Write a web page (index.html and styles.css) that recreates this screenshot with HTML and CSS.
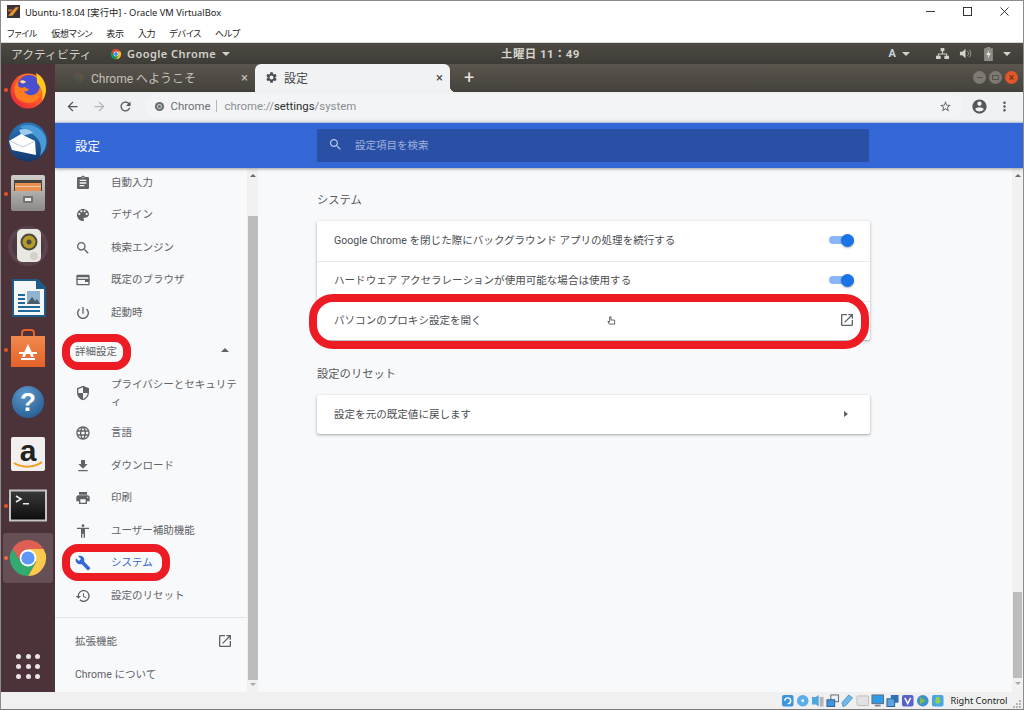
FILE: index.html
```html
<!DOCTYPE html>
<html lang="ja">
<head>
<meta charset="utf-8">
<title>Ubuntu-18.04 [実行中] - Oracle VM VirtualBox</title>
<link rel="stylesheet" href="styles.css">
</head>
<body>
<svg class="defs" width="0" height="0" aria-hidden="true">
  <defs>
    <symbol id="i-assign" viewBox="0 0 24 24"><path d="M19 3h-4.18C14.4 1.84 13.3 1 12 1c-1.3 0-2.4.84-2.82 2H5c-1.1 0-2 .9-2 2v14c0 1.1.9 2 2 2h14c1.1 0 2-.9 2-2V5c0-1.1-.9-2-2-2zm-7 0c.55 0 1 .45 1 1s-.45 1-1 1-1-.45-1-1 .45-1 1-1zm2 14H7v-2h7v2zm3-4H7v-2h10v2zm0-4H7V7h10v2z"/></symbol>
    <symbol id="i-palette" viewBox="0 0 24 24"><path d="M12 3c-4.97 0-9 4.03-9 9s4.03 9 9 9c.83 0 1.5-.67 1.5-1.5 0-.39-.15-.74-.39-1.01-.23-.26-.38-.61-.38-.99 0-.83.67-1.5 1.5-1.5H16c2.76 0 5-2.24 5-5 0-4.42-4.03-8-9-8zm-5.5 9c-.83 0-1.5-.67-1.5-1.5S5.67 9 6.5 9 8 9.67 8 10.5 7.33 12 6.5 12zm3-4C8.67 8 8 7.33 8 6.5S8.67 5 9.5 5s1.5.67 1.5 1.5S10.33 8 9.5 8zm5 0c-.83 0-1.5-.67-1.5-1.5S13.67 5 14.5 5s1.5.67 1.5 1.5S15.33 8 14.5 8zm3 4c-.83 0-1.5-.67-1.5-1.5S16.67 9 17.5 9s1.5.67 1.5 1.5-.67 1.5-1.5 1.5z"/></symbol>
    <symbol id="i-search" viewBox="0 0 24 24"><path d="M15.5 14h-.79l-.28-.27C15.41 12.59 16 11.11 16 9.5 16 5.91 13.09 3 9.5 3S3 5.91 3 9.5 5.91 16 9.5 16c1.61 0 3.09-.59 4.23-1.57l.27.28v.79l5 4.99L20.49 19l-4.99-5zm-6 0C7.01 14 5 11.99 5 9.5S7.01 5 9.5 5 14 7.01 14 9.5 11.99 14 9.5 14z"/></symbol>
    <symbol id="i-browser" viewBox="0 0 24 24"><path d="M20 4H4c-1.11 0-2 .9-2 2v12c0 1.1.89 2 2 2h16c1.1 0 2-.9 2-2V6c0-1.1-.89-2-2-2zm0 14H4v-6h11v3h5v3zm0-8H4V8h16v2z"/></symbol>
    <symbol id="i-power" viewBox="0 0 24 24"><path d="M13 3h-2v10h2V3zm4.83 2.17l-1.42 1.42C17.99 7.86 19 9.81 19 12c0 3.87-3.13 7-7 7s-7-3.13-7-7c0-2.19 1.01-4.14 2.58-5.42L6.17 5.17C4.23 6.82 3 9.26 3 12c0 4.97 4.03 9 9 9s9-4.03 9-9c0-2.74-1.23-5.18-3.17-6.83z"/></symbol>
    <symbol id="i-shield" viewBox="0 0 24 24"><path d="M12 1L3 5v6c0 5.55 3.84 10.74 9 12 5.16-1.26 9-6.45 9-12V5l-9-4zm0 10.99h7c-.53 4.12-3.28 7.79-7 8.94V12H5V6.3l7-3.11v8.8z"/></symbol>
    <symbol id="i-globe" viewBox="0 0 24 24"><path d="M11.99 2C6.47 2 2 6.48 2 12s4.47 10 9.99 10C17.52 22 22 17.52 22 12S17.52 2 11.99 2zm6.93 6h-2.95c-.32-1.25-.78-2.45-1.38-3.56 1.84.63 3.37 1.91 4.33 3.56zM12 4.04c.83 1.2 1.48 2.53 1.91 3.96h-3.82c.43-1.43 1.08-2.76 1.91-3.96zM4.26 14C4.1 13.36 4 12.69 4 12s.1-1.36.26-2h3.38c-.08.66-.14 1.32-.14 2 0 .68.06 1.34.14 2H4.26zm.82 2h2.95c.32 1.25.78 2.45 1.38 3.56-1.84-.63-3.37-1.9-4.33-3.56zm2.95-8H5.08c.96-1.66 2.49-2.93 4.33-3.56C8.81 5.55 8.35 6.75 8.03 8zM12 19.96c-.83-1.2-1.48-2.53-1.91-3.96h3.82c-.43 1.43-1.08 2.76-1.91 3.96zM14.34 14H9.66c-.09-.66-.16-1.32-.16-2 0-.68.07-1.35.16-2h4.68c.09.65.16 1.32.16 2 0 .68-.07 1.34-.16 2zm.25 5.56c.6-1.11 1.06-2.31 1.38-3.56h2.95c-.96 1.65-2.49 2.93-4.33 3.56zM16.36 14c.08-.66.14-1.32.14-2 0-.68-.06-1.34-.14-2h3.38c.16.64.26 1.31.26 2s-.1 1.36-.26 2h-3.38z"/></symbol>
    <symbol id="i-download" viewBox="0 0 24 24"><path d="M19 9h-4V3H9v6H5l7 7 7-7zM5 18v2h14v-2H5z"/></symbol>
    <symbol id="i-print" viewBox="0 0 24 24"><path d="M19 8H5c-1.66 0-3 1.34-3 3v6h4v4h12v-4h4v-6c0-1.66-1.34-3-3-3zm-3 11H8v-5h8v5zm3-7c-.55 0-1-.45-1-1s.45-1 1-1 1 .45 1 1-.45 1-1 1zm-1-9H6v4h12V3z"/></symbol>
    <symbol id="i-access" viewBox="0 0 24 24"><path d="M12 2c1.1 0 2 .9 2 2s-.9 2-2 2-2-.9-2-2 .9-2 2-2zm9 7h-6v13h-2v-6h-2v6H9V9H3V7h18v2z"/></symbol>
    <symbol id="i-build" viewBox="0 0 24 24"><path d="M22.7 19l-9.1-9.1c.9-2.3.4-5-1.500-6.900-2-2-5-2.400-7.400-1.300L9 6 6 9 1.600 4.700C.4 7.100.9 10.100 2.900 12.100c1.900 1.900 4.600 2.400 6.900 1.500l9.100 9.100c.4.4 1 .4 1.400 0l2.300-2.300c.5-.4.5-1.100.1-1.400z"/></symbol>
    <symbol id="i-restore" viewBox="0 0 24 24"><path d="M13 3c-4.97 0-9 4.03-9 9H1l3.89 3.89.07.14L9 12H6c0-3.87 3.13-7 7-7s7 3.13 7 7-3.13 7-7 7c-1.93 0-3.68-.79-4.94-2.06l-1.42 1.42C8.27 19.99 10.51 21 13 21c4.97 0 9-4.03 9-9s-4.03-9-9-9zm-1 5v5l4.28 2.54.72-1.21-3.5-2.08V8H12z"/></symbol>
    <symbol id="i-open" viewBox="0 0 24 24"><path d="M19 19H5V5h7V3H5c-1.11 0-2 .9-2 2v14c0 1.1.89 2 2 2h14c1.1 0 2-.9 2-2v-7h-2v7zM14 3v2h3.59l-9.83 9.83 1.41 1.41L19 6.41V10h2V3h-7z"/></symbol>
    <symbol id="i-gear" viewBox="0 0 24 24"><path d="M19.14 12.94c.04-.3.06-.61.06-.94 0-.32-.02-.64-.07-.94l2.03-1.58c.18-.14.23-.41.12-.61l-1.92-3.32c-.12-.22-.37-.29-.59-.22l-2.39.96c-.5-.38-1.03-.7-1.62-.94l-.36-2.54c-.04-.24-.24-.41-.48-.41h-3.84c-.24 0-.43.17-.47.41l-.36 2.54c-.59.24-1.13.57-1.62.94l-2.39-.96c-.22-.08-.47 0-.59.22L2.74 8.87c-.12.21-.08.47.12.61l2.03 1.58c-.05.3-.09.63-.09.94s.02.64.07.94l-2.03 1.58c-.18.14-.23.41-.12.61l1.92 3.32c.12.22.37.29.59.22l2.39-.96c.5.38 1.03.7 1.62.94l.36 2.54c.05.24.24.41.48.41h3.84c.24 0 .44-.17.47-.41l.36-2.54c.59-.24 1.13-.56 1.62-.94l2.39.96c.22.08.47 0 .59-.22l1.92-3.32c.12-.22.07-.47-.12-.61l-2.01-1.58zM12 15.6c-1.98 0-3.6-1.62-3.6-3.6s1.62-3.6 3.6-3.6 3.6 1.62 3.6 3.6-1.62 3.6-3.6 3.6z"/></symbol>
    <symbol id="i-back" viewBox="0 0 24 24"><path d="M20 11H7.83l5.59-5.59L12 4l-8 8 8 8 1.41-1.41L7.83 13H20v-2z"/></symbol>
    <symbol id="i-forward" viewBox="0 0 24 24"><path d="M12 4l-1.41 1.41L16.17 11H4v2h12.17l-5.58 5.59L12 20l8-8z"/></symbol>
    <symbol id="i-refresh" viewBox="0 0 24 24"><path d="M17.65 6.35C16.2 4.9 14.21 4 12 4c-4.42 0-7.99 3.58-7.99 8s3.57 8 7.99 8c3.73 0 6.84-2.55 7.73-6h-2.08c-.82 2.33-3.04 4-5.65 4-3.31 0-6-2.69-6-6s2.69-6 6-6c1.66 0 3.14.69 4.22 1.78L13 11h7V4l-2.35 2.35z"/></symbol>
    <symbol id="i-account" viewBox="0 0 24 24"><path d="M12 2C6.48 2 2 6.48 2 12s4.48 10 10 10 10-4.48 10-10S17.52 2 12 2zm0 3c1.66 0 3 1.34 3 3s-1.34 3-3 3-3-1.34-3-3 1.34-3 3-3zm0 14.2c-2.5 0-4.71-1.28-6-3.22.03-1.99 4-3.08 6-3.08 1.99 0 5.97 1.09 6 3.08-1.29 1.94-3.5 3.22-6 3.22z"/></symbol>
    <symbol id="i-star" viewBox="0 0 24 24"><path d="M22 9.24l-7.19-.62L12 2 9.19 8.63 2 9.24l5.46 4.73L5.82 21 12 17.27 18.18 21l-1.63-7.03L22 9.24zM12 15.4l-3.76 2.27 1-4.28-3.32-2.88 4.38-.38L12 6.1l1.71 4.04 4.38.38-3.32 2.88 1 4.28L12 15.4z"/></symbol>
    <symbol id="i-more" viewBox="0 0 24 24"><path d="M12 8c1.1 0 2-.9 2-2s-.9-2-2-2-2 .9-2 2 .9 2 2 2zm0 2c-1.1 0-2 .9-2 2s.9 2 2 2 2-.9 2-2-.9-2-2-2zm0 6c-1.1 0-2 .9-2 2s.9 2 2 2 2-.9 2-2-.9-2-2-2z"/></symbol>
    <symbol id="chrome-logo" viewBox="0 0 48 48">
      <path fill="#db4437" d="M39.600 15L24 15 16.800 28 8.400 15A18 18 0 0 1 39.600 15Z"/>
      <path fill="#fbc02d" d="M39.600 15A18 18 0 0 1 24 42L32 28 24 15Z"/>
      <path fill="#0f9d58" d="M24 42A18 18 0 0 1 8.400 15L16.800 28 32 28Z"/>
      <circle cx="24" cy="24" r="8.400" fill="#fff"/>
      <circle cx="24" cy="24" r="6.600" fill="#4285f4"/>
    </symbol>
    <linearGradient id="fx" x1="0" y1="1" x2="1" y2="0"><stop offset="0" stop-color="#e8203f"/><stop offset=".55" stop-color="#ff5a24"/><stop offset="1" stop-color="#ff9a1f"/></linearGradient>
    <linearGradient id="cab" x1="0" y1="0" x2="0" y2="1"><stop offset="0" stop-color="#d0cecb"/><stop offset="1" stop-color="#8c8a86"/></linearGradient>
    <linearGradient id="term" x1="0" y1="0" x2="0" y2="1"><stop offset="0" stop-color="#3a3a3a"/><stop offset="1" stop-color="#0d0d0d"/></linearGradient>
    <linearGradient id="bag" x1="0" y1="0" x2="0" y2="1"><stop offset="0" stop-color="#f08a4e"/><stop offset="1" stop-color="#e4622a"/></linearGradient>
    <radialGradient id="help" cx=".4" cy=".25" r=".9"><stop offset="0" stop-color="#5d97c9"/><stop offset="1" stop-color="#20588f"/></radialGradient>
    <linearGradient id="tb" x1="0" y1="0" x2="0" y2="1"><stop offset="0" stop-color="#2a78be"/><stop offset="1" stop-color="#14386e"/></linearGradient>
  </defs>
</svg>

<div class="window">
  <header class="titlebar">
    <svg class="vbox-icon" viewBox="0 0 12 12"><rect width="12" height="12" fill="#3b3338"/><path d="M1 10L8 2h3L5 10z" fill="#e89a2a"/><path d="M1 4h4v2H1z" fill="#c9672a"/></svg>
    <span class="title-text">Ubuntu-18.04 [実行中] - Oracle VM VirtualBox</span>
    <div class="win-buttons">
      <svg class="wb" viewBox="0 0 10 10"><path d="M0 5h10" stroke="#222" stroke-width="1" fill="none"/></svg>
      <svg class="wb" viewBox="0 0 10 10"><rect x=".5" y=".5" width="9" height="9" stroke="#222" fill="none"/></svg>
      <svg class="wb" viewBox="0 0 10 10"><path d="M.5.5l9 9M9.5.5l-9 9" stroke="#222" stroke-width="1" fill="none"/></svg>
    </div>
  </header>
  <nav class="menubar">
    <span>ファイル</span><span>仮想マシン</span><span>表示</span><span>入力</span><span>デバイス</span><span>ヘルプ</span>
  </nav>

  <div class="topbar">
    <span class="activities">アクティビティ</span>
    <svg class="app-logo"><use href="#chrome-logo"/></svg>
    <span class="app-name">Google Chrome</span>
    <span class="caret"></span>
    <span class="clock">土曜日 11：49</span>
    <div class="tray">
      <span class="tray-a">A</span><span class="caret"></span>
      <svg class="tray-net" viewBox="0 0 14 14"><path d="M5 1h4v3.500H5zM0 9.500h5V13H0zM9 9.500h5V13H9zM6.500 4.500h1V7H12v2.500h-1V8H3v1.500H2V7h4.500z" fill="#d5d2cb"/></svg>
      <svg class="tray-vol" viewBox="0 0 14 14"><path d="M1 5h2.500L7 2v10L3.500 9H1z" fill="#d5d2cb"/><path d="M9 4.500a3 3 0 0 1 0 5M11 3a5.500 5.500 0 0 1 0 8" stroke="#a5a29b" fill="none"/></svg>
      <svg class="tray-bat" viewBox="0 0 12 16"><path d="M4 0h4v1.500h3V16H1V1.500h3z" fill="#8f8c85"/><path d="M7 3L3.500 9H6l-1 4.500L8.500 7H6z" fill="#f0eee9"/></svg>
      <span class="caret"></span>
    </div>
  </div>

  <div class="desktop">
    <aside class="dock">
      <div class="dock-item running">
        <svg class="dock-icon" viewBox="0 0 48 48">
          <circle cx="24" cy="25" r="17.500" fill="url(#fx)"/>
          <circle cx="25" cy="20" r="11" fill="#4a4fd0"/>
          <path d="M32 7c6 3 10 9 10 17 0 4-2 8-4 11 1-5 1-10-2-14-1-2-2-3-3-4 0-3 0-7-1-10z" fill="#ffc81f"/>
          <path d="M15 13c-2 3-1 6 0 8 2 1 4 1 6 0 1 1 2 2 4 2-1 2-3 3-5 2 1 3 5 5 9 4 4-1 7-5 7-9 2 5 1 11-4 15-5 3-13 3-18-2-5-5-5-13 1-20z" fill="#ff7d1f"/>
          <path d="M16 15c2-1 4-1 6 1-1 1-3 2-5 1z" fill="#ffd9a0"/>
        </svg>
      </div>
      <div class="dock-item">
        <svg class="dock-icon" viewBox="0 0 48 48">
          <circle cx="24" cy="24" r="19.500" fill="url(#tb)"/>
          <path d="M16 9c9-5 22 0 26 11 1 7-1 13-6 18 2-7 1-14-4-19-4-4-10-6-16-10z" fill="#4a9ad8"/>
          <path d="M15 12c5-2 11-1 14 3l-11 3z" fill="#9ccbee"/>
          <path d="M5 23l12-7 14 7 1 14-24-5z" fill="#fff"/>
          <path d="M6 23l13 6 12-6" fill="none" stroke="#c4ccd6"/>
        </svg>
      </div>
      <div class="dock-item running">
        <svg class="dock-icon" viewBox="0 0 48 48"><rect x="7" y="5" width="34" height="36" rx="2" fill="url(#cab)"/><rect x="10" y="10" width="28" height="11" fill="#45413d"/><rect x="11" y="13" width="26" height="8" fill="#e88f52"/><rect x="11" y="16" width="26" height="1" fill="#f7c7a0"/><rect x="19" y="26" width="10" height="7" rx="1" fill="#74726f"/><rect x="21" y="28" width="6" height="3" fill="#eee"/></svg>
      </div>
      <div class="dock-item">
        <svg class="dock-icon" viewBox="0 0 48 48"><circle cx="24" cy="24" r="20" fill="#5a434d"/><circle cx="24" cy="24" r="16" fill="#4f3a43"/><rect x="13" y="7" width="24" height="33" rx="5" fill="#e8e8e1"/><circle cx="25" cy="20" r="8.500" fill="#4c4a3c"/><circle cx="25" cy="20" r="6.500" fill="#b59a2c"/><circle cx="25" cy="20" r="2.500" fill="#4c4a3c"/><circle cx="30" cy="34" r="4" fill="#d2d2cb"/></svg>
      </div>
      <div class="dock-item">
        <svg class="dock-icon" viewBox="0 0 48 48"><path d="M8 5h26l8 8v30H8z" fill="#1f5b86"/><path d="M10 7h22v8h8v26H10z" fill="#f4f6f8"/><rect x="14" y="20" width="7" height="2" fill="#1f6a9a"/><rect x="14" y="24" width="7" height="2" fill="#1f6a9a"/><rect x="14" y="28" width="7" height="2" fill="#1f6a9a"/><rect x="14" y="32" width="22" height="2" fill="#1f6a9a"/><rect x="14" y="36" width="22" height="2" fill="#1f6a9a"/><rect x="23" y="17" width="13" height="13" fill="#8fb4d2"/><path d="M23 30l5-7 3 4 2-2 3 5z" fill="#4a5a66"/></svg>
      </div>
      <div class="dock-item running">
        <svg class="dock-icon" viewBox="0 0 48 48"><path d="M18 11V7a3 3 0 0 1 3-3h6a3 3 0 0 1 3 3v4" fill="none" stroke="#e4622a" stroke-width="2"/><path d="M7 10h34v31H7z" fill="url(#bag)"/><path d="M24 18l-6 13h3l1-3h4l1 3h3z" fill="#fff"/><rect x="15" y="26" width="18" height="2" fill="#fff"/><rect x="17" y="32" width="14" height="2" fill="#fff"/></svg>
      </div>
      <div class="dock-item">
        <svg class="dock-icon" viewBox="0 0 48 48"><circle cx="24" cy="24" r="16" fill="url(#help)"/><text x="24" y="33" text-anchor="middle" class="help-mark">?</text></svg>
      </div>
      <div class="dock-item">
        <svg class="dock-icon" viewBox="0 0 48 48"><rect x="7" y="7" width="34" height="34" rx="2" fill="#f1f0ee"/><text x="24" y="31" text-anchor="middle" class="amazon-mark">a</text><path d="M10 33c8 5 20 5 28-1" fill="none" stroke="#f39b1f" stroke-width="2"/></svg>
      </div>
      <div class="dock-item running">
        <svg class="dock-icon" viewBox="0 0 48 48"><rect x="6" y="8.500" width="36" height="30" fill="url(#term)" stroke="#c4c4c4" stroke-width="2"/><path d="M12 14l5 3-5 3" fill="none" stroke="#eee" stroke-width="1.500"/><rect x="19" y="21" width="6" height="1.500" fill="#eee"/></svg>
      </div>
      <div class="dock-item running active">
        <svg class="dock-icon"><use href="#chrome-logo"/></svg>
      </div>
      <div class="apps-grid">
        <i></i><i></i><i></i><i></i><i></i><i></i><i></i><i></i><i></i>
      </div>
    </aside>

    <section class="chrome">
      <div class="tabstrip">
        <div class="tab">
          <svg class="fav-dim"><use href="#chrome-logo"/></svg>
          <span class="tab-title">Chrome へようこそ</span>
          <span class="tab-x">×</span>
        </div>
        <div class="tab tab-active">
          <svg class="ic fav-gear"><use href="#i-gear"/></svg>
          <span class="tab-title">設定</span>
          <span class="tab-x">×</span>
        </div>
        <span class="plus">+</span>
        <div class="wm-buttons">
          <span class="wm"><i class="wm-min"></i></span>
          <span class="wm"><i class="wm-max"></i></span>
          <span class="wm wm-close">×</span>
        </div>
      </div>

      <div class="toolbar">
        <svg class="ic nav"><use href="#i-back"/></svg>
        <svg class="ic nav nav-off"><use href="#i-forward"/></svg>
        <svg class="ic nav"><use href="#i-refresh"/></svg>
        <div class="omnibox">
          <svg class="omni-chip" viewBox="0 0 24 24"><circle cx="12" cy="12" r="10" fill="#6a6d71"/><circle cx="12" cy="12" r="5" fill="#f4f5f7"/><circle cx="12" cy="12" r="3.500" fill="#6a6d71"/></svg>
          <span class="omni-name">Chrome</span>
          <span class="omni-sep"></span>
          <span class="omni-url">chrome://<b>settings</b>/system</span>
          <svg class="ic omni-star"><use href="#i-star"/></svg>
        </div>
        <svg class="ic tool-account"><use href="#i-account"/></svg>
        <svg class="ic tool-more"><use href="#i-more"/></svg>
      </div>

      <div class="app-header">
        <h1 class="app-title">設定</h1>
        <div class="searchbox">
          <svg class="ic search-ic"><use href="#i-search"/></svg>
          <span>設定項目を検索</span>
        </div>
      </div>

      <div class="app-body">
        <div class="sidebar">
          <ul class="side-list">
            <li class="side-row"><svg class="ic"><use href="#i-assign"/></svg><span>自動入力</span></li>
            <li class="side-row"><svg class="ic"><use href="#i-palette"/></svg><span>デザイン</span></li>
            <li class="side-row"><svg class="ic"><use href="#i-search"/></svg><span>検索エンジン</span></li>
            <li class="side-row"><svg class="ic"><use href="#i-browser"/></svg><span>既定のブラウザ</span></li>
            <li class="side-row"><svg class="ic"><use href="#i-power"/></svg><span>起動時</span></li>
            <li class="side-head"><span>詳細設定</span><i class="tri-up"></i></li>
            <li class="side-row side-two"><svg class="ic"><use href="#i-shield"/></svg><span>プライバシーとセキュリティ</span></li>
            <li class="side-row"><svg class="ic"><use href="#i-globe"/></svg><span>言語</span></li>
            <li class="side-row"><svg class="ic"><use href="#i-download"/></svg><span>ダウンロード</span></li>
            <li class="side-row"><svg class="ic"><use href="#i-print"/></svg><span>印刷</span></li>
            <li class="side-row"><svg class="ic"><use href="#i-access"/></svg><span>ユーザー補助機能</span></li>
            <li class="side-row side-on"><svg class="ic"><use href="#i-build"/></svg><span>システム</span></li>
            <li class="side-row"><svg class="ic"><use href="#i-restore"/></svg><span>設定のリセット</span></li>
            <li class="side-link side-first"><span>拡張機能</span><svg class="ic"><use href="#i-open"/></svg></li>
            <li class="side-link"><span>Chrome について</span></li>
          </ul>
        </div>
        <div class="scrollbar scrollbar-side"><i class="sb-up"></i><b class="thumb thumb-side"></b><i class="sb-down"></i></div>

        <main class="content">
          <h2 class="sec-title">システム</h2>
          <div class="card">
            <div class="card-row"><span>Google Chrome を閉じた際にバックグラウンド アプリの処理を続行する</span><span class="toggle"></span></div>
            <div class="card-row"><span>ハードウェア アクセラレーションが使用可能な場合は使用する</span><span class="toggle"></span></div>
            <div class="card-row card-last"><span>パソコンのプロキシ設定を開く</span><svg class="ic row-open"><use href="#i-open"/></svg></div>
          </div>
          <h2 class="sec-title sec-second">設定のリセット</h2>
          <div class="card">
            <div class="card-row card-last"><span>設定を元の既定値に戻します</span><i class="tri-right"></i></div>
          </div>
        </main>
        <div class="scrollbar scrollbar-main"><i class="sb-up"></i><b class="thumb thumb-main"></b><i class="sb-down"></i></div>
      </div>
    </section>
  </div>

  <footer class="statusbar">
    <svg class="st" viewBox="0 0 14 14"><rect x="1" y="1" width="12" height="12" rx="2" fill="#3f95dc"/><path d="M4 7a3 3 0 1 1 3 3" fill="none" stroke="#fff" stroke-width="1.500"/></svg>
    <svg class="st" viewBox="0 0 14 14"><circle cx="7" cy="7" r="6" fill="#58aee8"/><circle cx="7" cy="7" r="1.500" fill="#fff"/></svg>
    <svg class="st" viewBox="0 0 14 14"><path d="M1 3h4l3-2v12l-3-2H1z" fill="#4fa4e2"/><rect x="9" y="3" width="4" height="10" fill="#b5b5b5"/></svg>
    <svg class="st" viewBox="0 0 14 14"><rect x="5" y="1" width="8" height="7" fill="#e8eef4" stroke="#5b6b7b"/><rect x="1" y="6" width="8" height="7" fill="#3f95dc" stroke="#2c5f8f"/></svg>
    <svg class="st" viewBox="0 0 14 14"><path d="M2 13l-1-4 7-8 4 3-7 8z" fill="#6fb8ec" stroke="#3a7cb2" stroke-width=".7"/></svg>
    <svg class="st" viewBox="0 0 14 14"><rect x="1" y="2" width="12" height="10" rx="1" fill="#e2e2e2" stroke="#bdbdbd"/></svg>
    <svg class="st" viewBox="0 0 14 14"><rect x="1" y="1" width="12" height="9" fill="#2f9be8" stroke="#5b6b7b"/><rect x="4" y="11" width="6" height="2" fill="#7f8a94"/></svg>
    <svg class="st" viewBox="0 0 14 14"><rect x="5" y="1" width="8" height="8" fill="#2f6fb8"/><rect x="1" y="5" width="8" height="8" fill="#5ba4e0" stroke="#2c5f8f"/></svg>
    <svg class="st" viewBox="0 0 14 14"><rect x="1" y="1" width="12" height="12" rx="2" fill="#5a62c8"/><path d="M4 4l3 6 3-6" fill="none" stroke="#fff" stroke-width="1.500"/></svg>
    <svg class="st" viewBox="0 0 14 14"><circle cx="7" cy="7" r="6" fill="#3f8fcf"/><path d="M4 3l6 4-6 4z" fill="#7bc043"/></svg>
    <svg class="st" viewBox="0 0 14 14"><rect x="1" y="1" width="12" height="12" rx="2" fill="#49a5e4"/><path d="M5 3h4v4h2l-4 4-4-4h2z" fill="#8fd14f"/></svg>
    <span class="host-key">Right Control</span>
    <svg class="grip" viewBox="0 0 8 8"><path d="M6 0h2v2H6zM3 3h2v2H3zM6 3h2v2H6zM0 6h2v2H0zM3 6h2v2H3zM6 6h2v2H6z" fill="#b5b5b5"/></svg>
  </footer>

  <span class="ring ring-proxy"></span>
  <span class="ring ring-advanced"></span>
  <span class="ring ring-system"></span>
  <svg class="cursor" viewBox="0 0 10 10"><path d="M3 1h1.500v3.500H8.500V9H2.500L1 6l2 .5z" fill="#fff" stroke="#444" stroke-width=".9"/></svg>
</div>
</body>
</html>
```
FILE: styles.css
```css
* { box-sizing: border-box; }
html, body { margin: 0; padding: 0; }
body { width: 1024px; height: 710px; overflow: hidden; font-family: Roboto, "Noto Sans CJK JP", sans-serif; background: #fff; }
.defs { position: absolute; }
ul { list-style: none; margin: 0; padding: 0; }
h1, h2 { margin: 0; font-weight: 400; }

.window { position: relative; width: 1024px; height: 710px; border: 1px solid #8c8c8c; border-bottom-color: #7a7a7a; display: flex; flex-direction: column; overflow: hidden; background: #fff; }

.titlebar { height: 25px; flex: none; display: flex; align-items: center; padding-left: 6px; padding-bottom: 4px; font-family: "Noto Sans", "Noto Sans CJK JP", sans-serif; font-size: 9.300px; color: #222; background: #fff; }
.vbox-icon { width: 13px; height: 13px; margin-right: 5px; }
.title-text { white-space: nowrap; }
.win-buttons { margin-left: auto; display: flex; gap: 28px; padding-right: 14px; }
.wb { width: 9px; height: 9px; display: block; }

.menubar { height: 16px; flex: none; display: flex; align-items: center; padding-left: 6px; padding-bottom: 1px; gap: 14px; font-family: "Noto Sans CJK JP", sans-serif; font-size: 9px; font-feature-settings: "palt"; letter-spacing: -.25px; color: #222; background: #fff; }

.topbar { height: 22px; flex: none; display: flex; align-items: center; position: relative; padding-left: 10px; color: #d5d2cb; background: linear-gradient(#4c4a43, #3e3c36); font-size: 11.800px; border-top: 1px solid #d8d8d8; }
.activities { width: 99px; white-space: nowrap; }
.app-logo { width: 14px; height: 14px; margin-right: 4px; margin-left: -1px; }
.app-name { font-family: "Noto Sans", sans-serif; font-weight: 600; font-size: 11px; letter-spacing: .45px; margin-right: 6px; }
.caret { display: inline-block; width: 0; height: 0; border-left: 4px solid transparent; border-right: 4px solid transparent; border-top: 4px solid #d5d2cb; }
.clock { position: absolute; left: 500px; top: 2px; font-weight: 700; font-size: 11.500px; letter-spacing: .4px; white-space: nowrap; }
.tray { margin-left: auto; display: flex; align-items: center; padding-right: 12px; }
.tray-a { font-weight: 700; font-size: 11px; color: #c9d4e2; margin-right: 6px; }
.tray-net { width: 13px; height: 13px; margin-left: 26px; }
.tray-vol { width: 13px; height: 13px; margin-left: 10px; }
.tray-bat { width: 11px; height: 14px; margin-left: 11px; margin-right: 9px; }

.desktop { flex: 1; min-height: 0; display: flex; }
.dock { width: 54px; flex: none; display: flex; flex-direction: column; background: #4c3239; }
.dock-item { height: 52px; flex: none; position: relative; display: flex; align-items: center; justify-content: center; }
.dock-icon { width: 48px; height: 48px; display: block; }
.running::before { content: ""; position: absolute; left: 3px; top: 24px; width: 4px; height: 4px; border-radius: 50%; background: #e95420; }
.active::after { content: ""; position: absolute; left: 2px; top: 1px; width: 50px; height: 50px; border-radius: 3px; background: rgba(255, 255, 255, .15); }
.apps-grid { margin-top: auto; margin-bottom: 13px; align-self: center; display: grid; grid-template-columns: repeat(3, 5px); gap: 5px 4.500px; }
.apps-grid i { width: 5px; height: 5px; border-radius: 50%; background: #e8e4e6; }
.help-mark { font-family: "Liberation Sans", sans-serif; font-weight: 700; font-size: 26px; fill: #fff; }
.amazon-mark { font-family: "Liberation Sans", sans-serif; font-weight: 700; font-size: 30px; fill: #222; }

.chrome { flex: 1; min-width: 0; display: flex; flex-direction: column; }
.tabstrip { height: 28px; flex: none; display: flex; align-items: stretch; background: linear-gradient(#5a564e, #45423c); color: #c4c1b9; font-size: 12px; border-bottom: 1px solid #3f3d38; }
.tab { width: 200px; display: flex; align-items: center; padding: 0 7px 1px 16px; position: relative; }
.fav-dim { width: 14px; height: 14px; opacity: .08; margin-right: 6px; }
.tab-title { flex: 1; white-space: nowrap; }
.tab-x { font-size: 13px; line-height: 1; }
.tab-active { width: 195px; background: #f1f2f4; color: #45474a; border-radius: 6px 6px 0 0; padding-left: 10px; margin-bottom: -1px; }
.tab-active .tab-x { color: #444; margin-right: 0; }
.tab-active::after { content: ""; position: absolute; right: -6px; bottom: 0; width: 6px; height: 6px; background: radial-gradient(circle at 100% 0, transparent 6px, #f1f2f4 6.500px); }
.ic { width: 14px; height: 14px; fill: #5f6368; flex: none; display: block; }
.fav-gear { width: 13px; height: 13px; margin-right: 6px; fill: #4a4c4f; }
.plus { font-size: 18px; font-weight: 400; color: #e6e4de; margin-left: 14px; line-height: 27px; }
.wm-buttons { margin-left: auto; display: flex; gap: 3px; align-items: center; padding-right: 5px; }
.wm { width: 13px; height: 13px; border-radius: 50%; background: #7c7a73; display: flex; align-items: center; justify-content: center; color: #4c2a18; font-size: 10px; line-height: 1; }
.wm-min { width: 6px; height: 1px; background: #55534d; }
.wm-max { width: 7px; height: 5px; border: 1px solid #55534d; }
.wm-close { background: #e2562a; }

.toolbar { height: 30px; flex: none; display: flex; align-items: center; padding-left: 10px; padding-bottom: 2px; background: #f0f1f3; }
.nav { width: 15px; height: 15px; margin-right: 11.500px; fill: #55575b; }
.nav-off { fill: #b4b6b9; }
.omnibox { flex: none; width: 817px; height: 24px; margin-left: 1px; border-radius: 12px; display: flex; align-items: center; padding-left: 8px; padding-right: 11px; background: #f3f4f6; font-size: 11.400px; }
.omni-chip { width: 11px; height: 11px; margin-right: 6px; }
.omni-name { color: #6c6f73; }
.omni-sep { width: 1px; height: 12px; background: #b5b7ba; margin: 0 7px 0 6px; }
.omni-url { color: #8a8d91; }
.omni-url b { font-weight: 400; color: #2c2d30; }
.omni-star { margin-left: auto; width: 13px; height: 13px; }
.tool-account { width: 17px; height: 17px; margin-left: 8px; fill: #55575b; }
.tool-more { width: 15px; height: 15px; margin-left: 9px; fill: #55575b; }

.app-header { height: 46px; flex: none; display: flex; align-items: center; background: #3367d6; border-top: 1px solid #b9c6e0; box-shadow: 0 1px 3px rgba(60, 64, 67, .5); position: relative; z-index: 1; }
.app-title { width: 262px; padding-left: 20px; font-size: 12.500px; color: #fff; }
.searchbox { width: 552px; height: 33px; display: flex; align-items: center; padding-left: 11px; padding-bottom: 2px; border-radius: 1px; background: #2a50a6; color: #9fb2dd; font-size: 10.500px; }
.search-ic { width: 15px; height: 15px; margin-right: 12px; fill: #b7c6e6; }

.app-body { flex: 1; min-height: 0; display: flex; background: #f8f9fa; }
.sidebar { width: 192px; flex: none; overflow: hidden; color: #5f6368; font-size: 10.500px; }
.side-list { margin-top: -1.500px; }
.side-row { min-height: 32.500px; display: flex; align-items: center; padding-left: 20px; padding-right: 8px; }
.side-row .ic { width: 16px; height: 16px; margin-right: 20px; }
.side-row span { line-height: 18px; }
.side-two { min-height: 43.750px; padding-bottom: 3px; }
.side-two span { line-height: 17px; }
.side-head { height: 44px; display: flex; align-items: center; justify-content: space-between; padding-left: 20px; padding-right: 18px; padding-bottom: 2px; }
.side-on { color: #3367d6; }
.side-on .ic { fill: #3367d6; }
.side-link { height: 33px; display: flex; align-items: center; justify-content: space-between; padding-left: 20px; padding-right: 14px; }
.side-link .ic { width: 16px; height: 16px; }
.side-first { margin-top: 12.250px; position: relative; }
.side-first::before { content: ""; position: absolute; left: 0; right: 0; top: -7px; height: 1px; background: #e4e5e7; }
.tri-up { width: 0; height: 0; border-left: 4px solid transparent; border-right: 4px solid transparent; border-bottom: 4px solid #5f6368; }
.tri-right { width: 0; height: 0; border-top: 3.500px solid transparent; border-bottom: 3.500px solid transparent; border-left: 4px solid #5f6368; margin-right: 6px; }

.scrollbar { width: 11px; flex: none; display: flex; flex-direction: column; align-items: center; background: #f1f1f1; }
.sb-up { width: 0; height: 0; margin-top: 6px; flex: none; border-left: 3px solid transparent; border-right: 3px solid transparent; border-bottom: 3px solid #6a6a6a; }
.sb-down { width: 0; height: 0; margin-bottom: 5px; flex: none; border-left: 3px solid transparent; border-right: 3px solid transparent; border-top: 3px solid #a8a8a8; }
.thumb { display: block; background: #bcbcbc; flex: none; }
.thumb-side { width: 10px; margin-top: 39px; height: 464px; margin-bottom: 3px; }
.thumb-main { width: 9.500px; margin-top: 415px; height: 86px; margin-bottom: 4px; }

.content { flex: 1; min-width: 0; padding: 24px 0 0 59px; }
.sec-title { font-size: 11.300px; line-height: 18px; color: #55585c; }
.sec-second { margin-top: 26px; }
.card { width: 553px; margin-top: 11px; background: #fff; border-radius: 2px; box-shadow: 0 1px 2px rgba(60, 64, 67, .3), 0 1px 3px 1px rgba(60, 64, 67, .12); font-size: 10.550px; color: #4b4e52; }
.card-row { height: 40px; display: flex; align-items: center; justify-content: space-between; padding: 0 16px 5px 17px; border-top: 1px solid #ebebeb; }
.card-row:first-child { border-top: 0; height: 40px; padding-bottom: 4px; }
.card-last { height: 39px; padding-bottom: 4px; }
.card-row:first-child.card-last { height: 39px; padding-bottom: 2px; }
.toggle { position: relative; width: 25px; height: 8px; margin-top: 2px; border-radius: 4px; background: #8ab4f8; }
.toggle::after { content: ""; position: absolute; right: 0; top: -2.500px; width: 13px; height: 13px; border-radius: 50%; background: #1a73e8; box-shadow: 0 1px 2px rgba(0, 0, 0, .3); }
.row-open { width: 16px; height: 16px; margin-right: -1px; margin-top: 2px; }

.statusbar { height: 17px; flex: none; display: flex; align-items: center; justify-content: flex-end; gap: 1.500px; padding-right: 2px; background: #f0f0f0; font-family: "Noto Sans", sans-serif; font-size: 9.200px; color: #222; }
.st { width: 13.500px; height: 13.500px; flex: none; }
.host-key { margin-left: 4px; margin-right: 4px; white-space: nowrap; }
.grip { width: 8px; height: 8px; align-self: flex-end; margin-bottom: 1px; }

.ring { position: absolute; border: 8px solid #ed1c24; display: block; pointer-events: none; z-index: 5; }
.ring-proxy { left: 308px; top: 293px; width: 560px; height: 55px; border-radius: 24px; }
.ring-advanced { left: 61px; top: 333px; width: 69px; height: 36px; border-radius: 16px; }
.ring-system { left: 61px; top: 543px; width: 108px; height: 37px; border-radius: 16px; }
.cursor { position: absolute; left: 606px; top: 314px; width: 9px; height: 11px; z-index: 6; }
```
